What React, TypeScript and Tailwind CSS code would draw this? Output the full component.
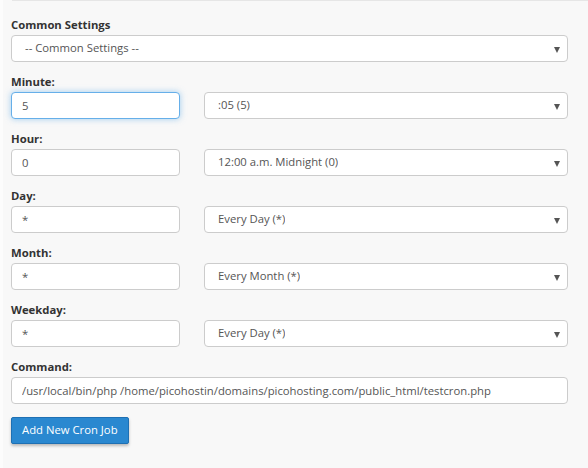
import React, { useState } from 'react';

const font = { fontFamily: '"Open Sans", "Liberation Sans", sans-serif' };

type Row = { label: string; value: string; choice: string; focused?: boolean };

const rows: Row[] = [
  { label: 'Minute:', value: '5', choice: ':05 (5)', focused: true },
  { label: 'Hour:', value: '0', choice: '12:00 a.m. Midnight (0)' },
  { label: 'Day:', value: '*', choice: 'Every Day (*)' },
  { label: 'Month:', value: '*', choice: 'Every Month (*)' },
  { label: 'Weekday:', value: '*', choice: 'Every Day (*)' },
];

const FakeSelect: React.FC<{ text: string; className?: string }> = ({ text, className }) => (
  <div
    className={
      'relative flex h-[27px] items-center rounded-[4px] border border-[#cccccc] bg-white pl-[13px] pr-[28px] text-[11.3px] text-[#555555] ' +
      (className ?? '')
    }
  >
    <span className="truncate">{text}</span>
    {/* caret */}
    <span className="absolute right-[7px] top-[11px] h-0 w-0 border-x-[3.5px] border-t-[6px] border-x-transparent border-t-[#555555]" />
  </div>
);

const Label: React.FC<{ children: React.ReactNode }> = ({ children }) => (
  <label className="mb-[2px] block pt-[2px] text-[11.3px] font-bold leading-[17px] text-[#333333]">{children}</label>
);

export default function App() {
  const [values, setValues] = useState(rows.map((r) => r.value));
  const [command, setCommand] = useState(
    '/usr/local/bin/php /home/picohostin/domains/picohosting.com/public_html/testcron.php'
  );

  return (
    <div style={font} className="min-h-[468px] w-[588px] border-l-[3px] border-[#fcfcfc] bg-[#f8f8f8]">
      <div className="ml-[9px] border-t border-[#e6e6e6]" />
      <div className="pl-[8px] pr-[20px] pt-[13px]">
        <div className="mb-[9px]">
          <Label>Common Settings</Label>
          <FakeSelect text="-- Common Settings --" />
        </div>

        {rows.map((r, i) => (
          <div key={r.label} className="mb-[9px]">
            <Label>{r.label}</Label>
            <div className="flex gap-[24px]">
              <input
                value={values[i]}
                onChange={(e) => setValues(values.map((v, j) => (j === i ? e.target.value : v)))}
                className={
                  'h-[27px] w-[169px] rounded-[4px] border bg-white px-[10px] text-[11.3px] text-[#555555] outline-none ' +
                  (r.focused
                    ? 'border-[#66afe9] shadow-[0_0_6px_rgba(102,175,233,0.6)]'
                    : 'border-[#cccccc]')
                }
              />
              <FakeSelect text={r.choice} className="flex-1" />
            </div>
          </div>
        ))}

        <div className="mb-[12px]">
          <Label>Command:</Label>
          <input
            value={command}
            onChange={(e) => setCommand(e.target.value)}
            className="h-[27px] w-full rounded-[4px] border border-[#cccccc] bg-white px-[10px] text-[11.3px] text-[#555555] outline-none"
          />
        </div>

        <button
          type="button"
          className="h-[27px] rounded-[2px] border border-[#1f70b3] bg-[#2a88d0] px-[10px] text-[11.3px] text-white shadow-[0_2px_3px_rgba(0,0,0,0.25)]"
        >
          Add New Cron Job
        </button>
      </div>
    </div>
  );
}
